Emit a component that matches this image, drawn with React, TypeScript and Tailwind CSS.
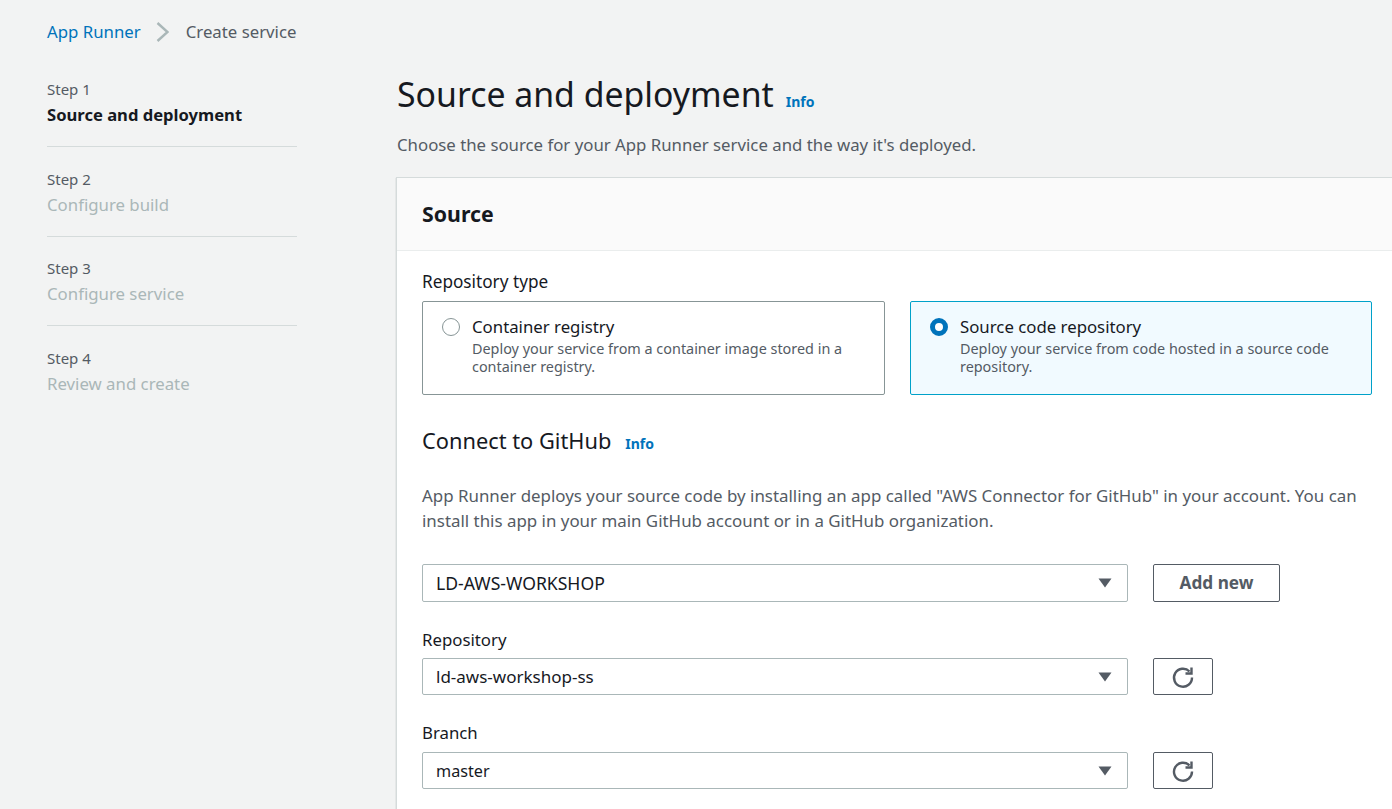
const steps = [
  { step: "Step 1", label: "Source and deployment", active: true },
  { step: "Step 2", label: "Configure build" },
  { step: "Step 3", label: "Configure service" },
  { step: "Step 4", label: "Review and create" },
];

function Caret() {
  return (
    <svg width="14" height="10" viewBox="0 0 14 10" className="shrink-0">
      <path d="M0.5 0.5h13L7 9.5z" fill="#545b64" />
    </svg>
  );
}

function Select({ value, className }: { value: string; className: string }) {
  return (
    <div className={"flex w-[706px] items-center justify-between rounded-[2px] border border-[#aab7b8] bg-white pl-[13px] pr-[15px] text-[#16191f] " + className}>
      <span>{value}</span>
      <Caret />
    </div>
  );
}

function RefreshButton() {
  return (
    <button className="flex h-[37px] w-[60px] items-center justify-center rounded-[2px] border border-[#545b64] bg-white">
      <svg width="24" height="24" viewBox="0 0 24 24" fill="none" stroke="#545b64" strokeWidth="2.4">
        <path d="M18.500 6.500A9 9 0 1 0 21 12.500" />
        <path d="M20.500 2.500v6h-6" />
      </svg>
    </button>
  );
}

function RadioCard({ title, desc, selected }: { title: string; desc: string; selected?: boolean }) {
  return (
    <div
      className={
        selected
          ? "flex h-[94px] w-[462px] rounded-[2px] border border-[#00a1c9] bg-[#f1faff] pl-[19px] pr-[20px] pt-[12px]"
          : "flex h-[94px] w-[463px] rounded-[2px] border border-[#879596] bg-white pl-[19px] pr-[20px] pt-[12px]"
      }
    >
      {selected ? (
        <span className="mt-[4px] h-[18px] w-[18px] shrink-0 rounded-full border-[5px] border-[#0073bb] bg-white" />
      ) : (
        <span className="mt-[4px] h-[18px] w-[18px] shrink-0 rounded-full border border-[#879596] bg-white" />
      )}
      <div className="ml-[12px]">
        <div className="text-[16.8px] leading-[25px] text-[#16191f]">{title}</div>
        <div className="mt-[1px] text-[14.4px] leading-[18px] text-[#545b64]">{desc}</div>
      </div>
    </div>
  );
}

export default function App() {
  return (
    <div className="flex h-[809px] w-full overflow-hidden bg-[#f2f3f3] font-['Noto_Sans',sans-serif]">
      <aside className="w-[397px] shrink-0 pl-[47px]">
        <nav className="flex h-[64px] items-center text-[16.8px]">
          <a className="text-[#0073bb]">App Runner</a>
          <svg width="13" height="20" viewBox="0 0 13 20" fill="none" stroke="#aab7b8" strokeWidth="2.4" className="ml-[15px] mr-[17px]">
            <path d="M1.500 1L11.500 10l-10 9" />
          </svg>
          <span className="text-[#545b64]">Create service</span>
        </nav>
        <ul className="w-[250px] pt-[15px]">
          {steps.map((s, i) => (
            <li key={s.step} className={i < 3 ? "mb-[21.67px] border-b border-[#d5dbdb] pb-[19px]" : ""}>
              <div className="text-[15px] leading-[20px] text-[#545b64]">{s.step}</div>
              <div
                className={
                  s.active
                    ? "mt-[4px] text-[16.6px] font-bold leading-[24px] text-[#16191f]"
                    : "mt-[4px] text-[16.8px] leading-[24px] text-[#aab7b8]"
                }
              >
                {s.label}
              </div>
            </li>
          ))}
        </ul>
      </aside>
      <main className="min-w-0 flex-1">
        <div className="flex items-baseline pt-[67px]">
          <h1 className="text-[33.8px] leading-[54px] text-[#16191f]">Source and deployment</h1>
          <a className="ml-[12px] text-[14px] font-bold text-[#0073bb]">Info</a>
        </div>
        <p className="mt-[12px] text-[16.8px] leading-[24px] text-[#545b64]">
          Choose the source for your App Runner service and the way it's deployed.
        </p>
        <section className="-ml-px mt-[20px] h-[700px] border-l border-t border-[#d5dbdb] bg-white shadow-[0_1px_1px_0_rgba(0,28,36,0.3)]">
          <header className="flex h-[73px] items-center border-b border-[#eaeded] bg-[#fafafa] pl-[25px]">
            <h2 className="text-[21.3px] font-bold text-[#16191f]">Source</h2>
          </header>
          <div className="pl-[25px] pr-[20px]">
            <div className="pt-[19px] text-[17.2px] leading-[24px] text-[#16191f]">Repository type</div>
            <div className="mt-[7px] flex gap-[25px]">
              <RadioCard title="Container registry" desc="Deploy your service from a container image stored in a container registry." />
              <RadioCard selected title="Source code repository" desc="Deploy your service from code hosted in a source code repository." />
            </div>
            <div className="mt-[28px] flex items-baseline">
              <h3 className="text-[21.8px] leading-[36px] text-[#16191f]">Connect to GitHub</h3>
              <a className="ml-[14px] text-[14px] font-bold text-[#0073bb]">Info</a>
            </div>
            <p className="mt-[24px] text-[16.9px] leading-[25px] text-[#545b64]">
              App Runner deploys your source code by installing an app called "AWS Connector for GitHub" in your account. You can install this app in your main GitHub account or in a GitHub organization.
            </p>
            <div className="mt-[31px] flex gap-[25px]">
              <Select value="LD-AWS-WORKSHOP" className="h-[38px] text-[17.6px]" />
              <button className="h-[38px] w-[127px] rounded-[2px] border border-[#545b64] bg-white text-[17.2px] font-bold text-[#545b64]">Add new</button>
            </div>
            <div className="mt-[26px] text-[16.8px] leading-[24px] text-[#16191f]">Repository</div>
            <div className="mt-[6px] flex gap-[25px]">
              <Select value="ld-aws-workshop-ss" className="h-[37px] text-[17px]" />
              <RefreshButton />
            </div>
            <div className="mt-[26px] text-[16.8px] leading-[24px] text-[#16191f]">Branch</div>
            <div className="mt-[7px] flex gap-[25px]">
              <Select value="master" className="h-[37px] pt-[1px] text-[16.2px]" />
              <RefreshButton />
            </div>
          </div>
        </section>
      </main>
    </div>
  );
}
